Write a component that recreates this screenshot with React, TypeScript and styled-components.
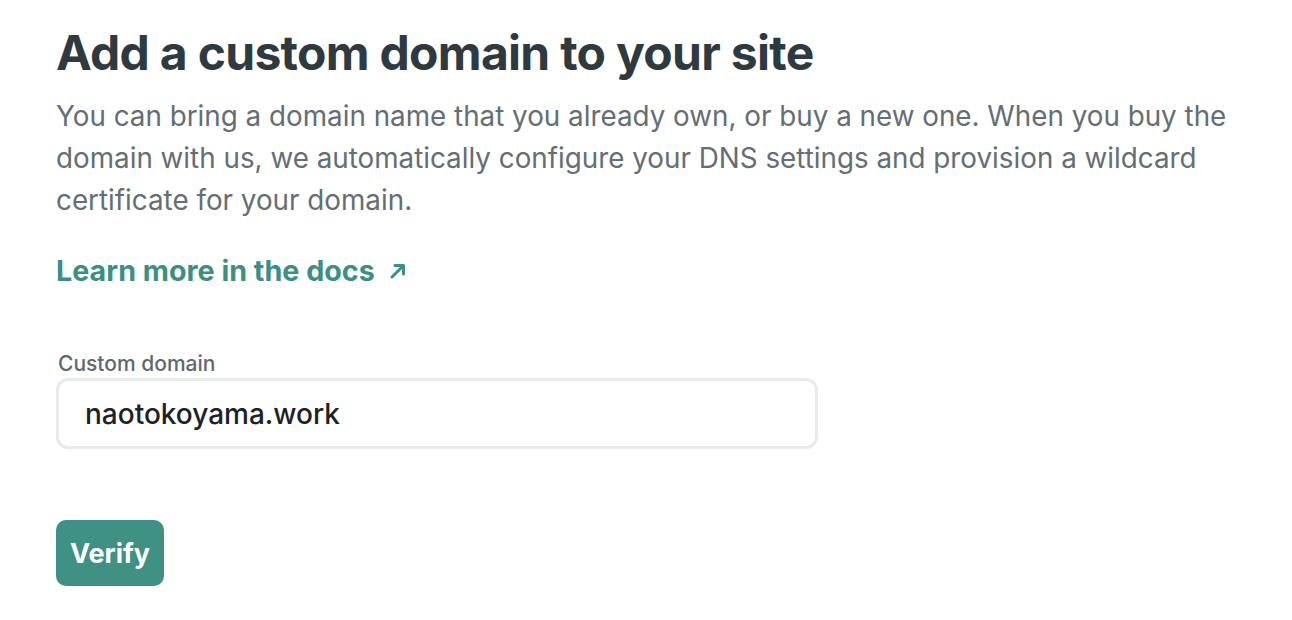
import styled, { createGlobalStyle } from 'styled-components';

const GlobalStyle = createGlobalStyle`
  body {
    margin: 0;
    background: #ffffff;
    font-family: Inter, "Noto Sans", sans-serif;
  }
`;

const Page = styled.div`
  padding: 22px 56px;
  max-width: 1180px;
`;

const Title = styled.h1`
  margin: 0;
  font-size: 48px;
  line-height: 62px;
  font-weight: 700;
  color: #2e3a40;
  letter-spacing: -0.7px;
`;

const Intro = styled.p`
  margin: 11px 0 0;
  font-size: 27.8px;
  line-height: 42px;
  color: #646e73;
`;

const DocsLink = styled.a`
  display: inline-flex;
  align-items: center;
  gap: 12px;
  margin-top: 32px;
  font-size: 28.7px;
  font-weight: 700;
  color: #3d8f83;
  text-decoration: none;
`;

const Field = styled.div`
  display: flex;
  flex-direction: column;
  gap: 2px;
  margin-top: 63px;
  width: 762px;
`;

const Label = styled.label`
  font-size: 21px;
  font-weight: 500;
  color: #5f686d;
  padding-left: 2px;
`;

const Input = styled.input`
  box-sizing: border-box;
  height: 71px;
  padding: 0 26px;
  border: 3px solid #e9eaea;
  border-radius: 12px;
  font-family: inherit;
  font-size: 28px;
  font-weight: 500;
  color: #1d2226;
  outline: none;
`;

const Button = styled.button`
  margin-top: 71px;
  height: 66px;
  padding: 0 14px;
  border: none;
  border-radius: 10px;
  background: #3f9183;
  color: #ffffff;
  font-family: inherit;
  font-size: 27px;
  font-weight: 700;
`;

function ArrowIcon() {
  return (
    <svg width="22" height="22" viewBox="0 0 22 22" fill="none">
      <path
        d="M5 17L16 6M8 5.5h8.5V14"
        stroke="currentColor"
        strokeWidth="3"
        strokeLinecap="round"
        strokeLinejoin="round"
      />
    </svg>
  );
}

export default function App() {
  return (
    <>
      <GlobalStyle />
      <Page>
        <Title>Add a custom domain to your site</Title>
        <Intro>
          You can bring a domain name that you already own, or buy a new one.
          When you buy the domain with us, we automatically configure your DNS
          settings and provision a wildcard certificate for your domain.
        </Intro>
        <DocsLink href="#">
          Learn more in the docs
          <ArrowIcon />
        </DocsLink>
        <Field>
          <Label>Custom domain</Label>
          <Input defaultValue="naotokoyama.work" />
        </Field>
        <Button>Verify</Button>
      </Page>
    </>
  );
}
